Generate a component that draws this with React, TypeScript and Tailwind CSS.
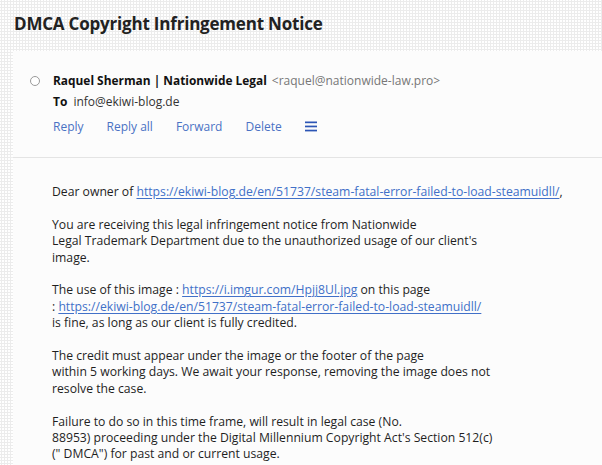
import React from 'react';

const font = { fontFamily: '"Open Sans", "Noto Sans", sans-serif' };

const Link = ({ children }: { children: React.ReactNode }) => (
  <a href="#" className="text-[#4170c8] underline underline-offset-2 decoration-[#4170c8]">{children}</a>
);

const Menu = () => (
  <svg width="12" height="11" viewBox="0 0 12 11" className="text-[#2c55b5]">
    <rect x="0" y="0.5" width="12" height="1.7" fill="currentColor" />
    <rect x="0" y="4.6" width="12" height="1.7" fill="currentColor" />
    <rect x="0" y="8.7" width="12" height="1.7" fill="currentColor" />
  </svg>
);

export default function App() {
  const actions = ['Reply', 'Reply all', 'Forward', 'Delete'];
  return (
    <div
      className="w-[602px] h-[465px] overflow-hidden bg-white bg-[radial-gradient(circle,#ececec_1px,transparent_1.2px)] bg-[length:3px_3px] text-[#1f1f1f]"
      style={font}
    >
      <h1 className="h-[51px] pl-[14px] pt-[11px] text-[17px] font-bold tracking-[-0.2px] text-[#222]">
        DMCA Copyright Infringement Notice
      </h1>
      <div className="ml-[13px] h-[414px] bg-[#fcfcfc]">
        <div className="flex gap-[13px] pl-[17px] pt-[19px] pb-[20px] border-b border-[#e4e4e4]">
          <div className="mt-[6px] w-[10px] h-[10px] rounded-full border border-[#9a9a9a] bg-white" />
          <div className="flex flex-col text-[12px]">
            <div className="leading-[21px]">
              <span className="font-bold text-[#111] text-[11.9px]">Raquel Sherman | Nationwide Legal</span>
              <span className="ml-[5px] text-[#777]">&lt;raquel@nationwide-law.pro&gt;</span>
            </div>
            <div className="leading-[21px]">
              <span className="font-bold text-[#111]">To</span>
              <span className="ml-[6px] text-[#333]">info@ekiwi-blog.de</span>
            </div>
            <div className="mt-[4px] flex items-center gap-[23px] leading-[21px] text-[#4a72c4]">
              {actions.map((a) => (
                <span key={a}>{a}</span>
              ))}
              <Menu />
            </div>
          </div>
        </div>
        <div className="pl-[39px] pt-[26px] text-[12.2px] leading-[16.4px] text-[#1f1f1f] flex flex-col gap-[16.4px]">
          <p>
            Dear owner of <Link>https://ekiwi-blog.de/en/51737/steam-fatal-error-failed-to-load-steamuidll/</Link>,
          </p>
          <p>
            You are receiving this legal infringement notice from Nationwide
            <br />
            Legal Trademark Department due to the unauthorized usage of our client's
            <br />
            image.
          </p>
          <p>
            The use of this image : <Link>https://i.imgur.com/Hpjj8Ul.jpg</Link> on this page
            <br />: <Link>https://ekiwi-blog.de/en/51737/steam-fatal-error-failed-to-load-steamuidll/</Link>
            <br />
            is fine, as long as our client is fully credited.
          </p>
          <p>
            The credit must appear under the image or the footer of the page
            <br />
            within 5 working days. We await your response, removing the image does not
            <br />
            resolve the case.
          </p>
          <p>
            Failure to do so in this time frame, will result in legal case (No.
            <br />
            88953) proceeding under the Digital Millennium Copyright Act's Section 512(c)
            <br />
            (" DMCA") for past and or current usage.
          </p>
        </div>
      </div>
    </div>
  );
}
